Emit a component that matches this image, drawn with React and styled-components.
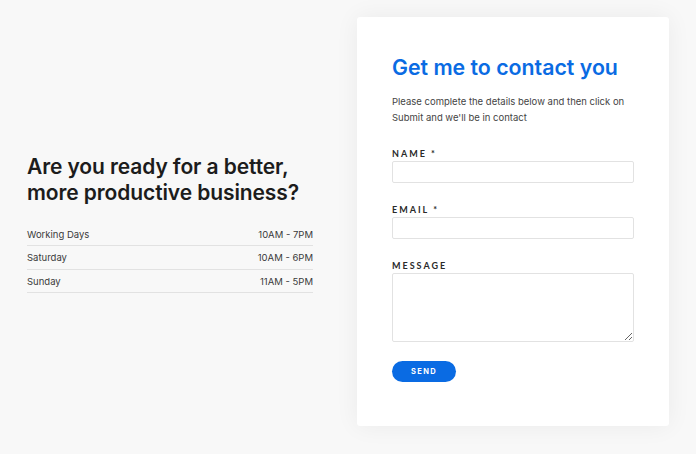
import React from 'react'
import styled, { createGlobalStyle } from 'styled-components'

const GlobalStyle = createGlobalStyle`
    body {
        margin: 0;
        background: #ffffff;
        font-family: 'Inter', 'DejaVu Sans', sans-serif;
        color: #222;
    }
`

const Section = styled.section`
    background: #f8f8f8;
    height: 454px;
    box-sizing: border-box;
    padding: 17px 27px 28px;
`

const Container = styled.div`
    display: grid;
    grid-template-columns: 286px 312px;
    column-gap: 44px;
    align-items: center;
    height: 100%;
`

const Intro = styled.div`
    display: flex;
    flex-direction: column;
    padding-top: 4px;
`

const Heading = styled.h2`
    margin: 0 0 17px;
    font-size: 21px;
    line-height: 26px;
    font-weight: 600;
    color: #1c1c1c;
    letter-spacing: -0.1px;
`

const Hours = styled.ul`
    list-style: none;
    margin: 0;
    padding: 0;
`

const HoursRow = styled.li`
    display: flex;
    justify-content: space-between;
    align-items: center;
    height: 22.5px;
    border-bottom: 1px solid #e2e2e2;
    font-size: 9.5px;
    color: #3a3a3a;
`

const Card = styled.div`
    background: #fff;
    border-radius: 3px;
    box-shadow: 0 0 24px rgba(0, 0, 0, 0.06);
    padding: 36px 35px 44px;
    height: 409px;
    box-sizing: border-box;
`

const Title = styled.h1`
    margin: 0 0 13px;
    font-size: 21.3px;
    line-height: 28px;
    font-weight: 600;
    color: #0a6be3;
`

const Lead = styled.p`
    margin: 0 0 23px;
    font-size: 9.5px;
    line-height: 15.5px;
    color: #444;
`

const Field = styled.div`
    display: flex;
    flex-direction: column;
    margin-bottom: 21px;
`

const Label = styled.label`
    font-family: 'Lato', 'Inter', sans-serif;
    font-size: 9px;
    font-weight: 700;
    letter-spacing: 2px;
    color: #2a2a2a;
    line-height: 12px;
    margin-bottom: 1px;
`

const Input = styled.input`
    height: 22px;
    box-sizing: border-box;
    border: 1px solid #e2e2e2;
    border-radius: 2px;
    background: #fff;
    outline: none;
    font: inherit;
    padding: 0 8px;
`

const TextArea = styled.textarea`
    display: block;
    height: 69px;
    box-sizing: border-box;
    border: 1px solid #e2e2e2;
    border-radius: 2px;
    outline: none;
    font: inherit;
    padding: 6px 8px;
    resize: vertical;
`

const SendButton = styled.button`
    display: block;
    width: 64px;
    height: 21px;
    border: none;
    border-radius: 11px;
    background: #0a6be3;
    color: #fff;
    font-family: 'Inter', sans-serif;
    font-size: 7.5px;
    font-weight: 700;
    letter-spacing: 1.3px;
    cursor: pointer;
    margin-top: -2px;
`

const hours = [
    { day: 'Working Days', time: '10AM - 7PM' },
    { day: 'Saturday', time: '10AM - 6PM' },
    { day: 'Sunday', time: '11AM - 5PM' },
]

export default function App() {
    return (
        <>
            <GlobalStyle />
            <Section>
                <Container>
                    <Intro>
                        <Heading>
                            Are you ready for a better,
                            <br />
                            more productive business?
                        </Heading>
                        <Hours>
                            {hours.map(({ day, time }) => (
                                <HoursRow key={day}>
                                    <span>{day}</span>
                                    <span>{time}</span>
                                </HoursRow>
                            ))}
                        </Hours>
                    </Intro>
                    <Card>
                        <Title>Get me to contact you</Title>
                        <Lead>
                            Please complete the details below and then click on
                            Submit and we'll be in contact
                        </Lead>
                        <Field>
                            <Label>NAME *</Label>
                            <Input type="text" />
                        </Field>
                        <Field>
                            <Label>EMAIL *</Label>
                            <Input type="email" />
                        </Field>
                        <Field>
                            <Label>MESSAGE</Label>
                            <TextArea />
                        </Field>
                        <SendButton>SEND</SendButton>
                    </Card>
                </Container>
            </Section>
        </>
    )
}
